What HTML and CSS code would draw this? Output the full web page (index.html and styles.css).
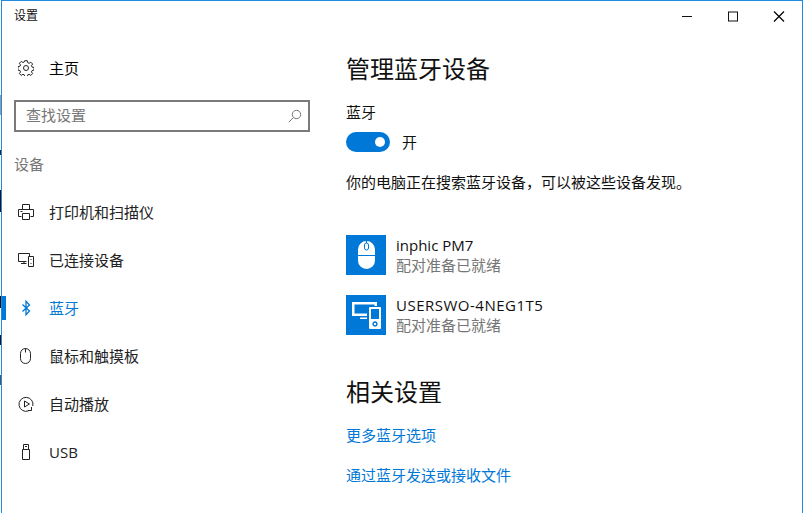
FILE: index.html
```html
<!DOCTYPE html>
<html lang="zh-CN">
<head>
<meta charset="utf-8">
<title>设置</title>
<link rel="stylesheet" href="styles.css">
</head>
<body>
<div class="window">
  <header class="titlebar">
    <span class="title">设置</span>
    <div class="controls">
      <svg class="ctl" width="46" height="30" viewBox="0 0 46 30"><path d="M18 15.500H28" fill="none" stroke="#111" /></svg>
      <svg class="ctl" width="46" height="30" viewBox="0 0 46 30"><rect x="18.500" y="11" width="9" height="9" fill="none" stroke="#111"/></svg>
      <svg class="ctl" width="46" height="30" viewBox="0 0 46 30"><path d="M18 10.500l10 10M28 10.500l-10 10" fill="none" stroke="#000" stroke-width="1.200"/></svg>
    </div>
  </header>
  <div class="body">
    <nav class="side">
      <a class="nav-item home">
        <svg class="ico" width="16" height="16" viewBox="0 0 16 16"><g fill="none" stroke="#222"><circle cx="8" cy="8" r="2.500"/><path d="M6.700.7h2.600l.4 2 1.400.6 1.700-1.100 1.800 1.800-1.100 1.700.6 1.400 2 .4v2.600l-2 .4-.6 1.400 1.100 1.700-1.800 1.800-1.700-1.100-1.400.6-.4 2H6.700l-.4-2-1.400-.6-1.700 1.100-1.800-1.800 1.100-1.700-.6-1.400-2-.4V6.700l2-.4.6-1.400-1.100-1.700 1.800-1.800 1.700 1.100 1.400-.6z"/></g></svg>
        <span>主页</span>
      </a>
      <div class="search">
        <span class="search-text">查找设置</span>
        <svg width="14" height="14" viewBox="0 0 14 14"><g fill="none" stroke="#777"><circle cx="8.500" cy="5.500" r="4.200"/><path d="M5.500 8.500L.8 13.200"/></g></svg>
      </div>
      <div class="group">设备</div>
      <a class="nav-item">
        <svg class="ico" width="16" height="16" viewBox="0 0 16 16"><g fill="none" stroke="#222"><path d="M4.500 5V.5h7V5M3.500 12.500H.5V5.500h15v7h-3"/><path d="M4.500 9.500h7v6h-7z"/><path d="M2.500 7.500h2"/></g></svg>
        <span>打印机和扫描仪</span>
      </a>
      <a class="nav-item">
        <svg class="ico" width="16" height="16" viewBox="0 0 16 16"><g fill="none" stroke="#222"><path d="M8.500 9.500H.5V1.500h11v3"/><path d="M3 11.500h5.500M6 9.500v2"/><path d="M10.500 4.500h5v10h-5z"/><path d="M12.500 7.500h1M12.500 11.500h1" /></g></svg>
        <span>已连接设备</span>
      </a>
      <a class="nav-item active">
        <svg class="ico" width="16" height="16" viewBox="0 0 16 16"><path d="M4.500 4.500l7 6.500L8 14.800V1.200l3.500 3.800-7 6.500" fill="none" stroke="#0078d7" stroke-width="1.300"/></svg>
        <span>蓝牙</span>
      </a>
      <a class="nav-item">
        <svg class="ico" width="16" height="16" viewBox="0 0 16 16"><g fill="none" stroke="#222"><rect x="2.500" y="0.500" width="10" height="15" rx="5"/><path d="M7.500 .5v4"/></g></svg>
        <span>鼠标和触摸板</span>
      </a>
      <a class="nav-item">
        <svg class="ico" width="16" height="16" viewBox="0 0 16 16"><g fill="none" stroke="#222"><path d="M10.500 14.900A7 7 0 1 1 14.800 10"/><path d="M6.500 5v6l5-3z"/><path d="M13.500 11v3.500H10"/></g></svg>
        <span>自动播放</span>
      </a>
      <a class="nav-item">
        <svg class="ico" width="16" height="16" viewBox="0 0 16 16"><g fill="none" stroke="#222"><path d="M4.500 5.500h7v10h-7z"/><path d="M5.500 5.500v-5h5v5"/><path d="M7 2.500h2" /></g></svg>
        <span class="latin">USB</span>
      </a>
    </nav>
    <main class="content">
      <h1 class="h1">管理蓝牙设备</h1>
      <div class="label">蓝牙</div>
      <div class="toggle-row">
        <span class="toggle"><span class="knob"></span></span>
        <span class="state">开</span>
      </div>
      <p class="note">你的电脑正在搜索蓝牙设备，可以被这些设备发现。</p>
      <ul class="devices">
        <li class="device">
          <span class="tile">
            <svg width="40" height="40" viewBox="0 0 40 40"><path fill="#fff" d="M12 14.500a8.500 8.500 0 0 1 17 0v11a8.500 8.500 0 0 1-17 0z"/><path fill="none" stroke="#0078d7" d="M12 20.500h17M20.500 6v2"/><rect x="18.500" y="8" width="4" height="7" rx="2" fill="none" stroke="#0078d7"/></svg>
          </span>
          <div class="dev-text"><div class="dev-name">inphic PM7</div><div class="dev-status">配对准备已就绪</div></div>
        </li>
        <li class="device">
          <span class="tile">
            <svg width="40" height="40" viewBox="0 0 40 40"><path fill="#fff" d="M6 7h25v4h-2.500V9.500h-20V18.500H21V21H6z"/><path fill="#fff" d="M14 22.500h7V24h-7z"/><path fill="#fff" fill-rule="evenodd" d="M24 12h10a1 1 0 0 1 1 1v20a1 1 0 0 1-1 1H24a1 1 0 0 1-1-1V13a1 1 0 0 1 1-1zm1 2v10h8V14zm4 12.300a2.700 2.700 0 1 0 .01 0zm0 1.500a1.200 1.200 0 1 1-.01 0z"/></svg>
          </span>
          <div class="dev-text"><div class="dev-name wide">USERSWO-4NEG1T5</div><div class="dev-status">配对准备已就绪</div></div>
        </li>
      </ul>
      <h2 class="h1 related">相关设置</h2>
      <a class="link">更多蓝牙选项</a>
      <a class="link">通过蓝牙发送或接收文件</a>
    </main>
  </div>
</div>
</body>
</html>
```

FILE: styles.css
```css
* { box-sizing: border-box; }
html, body { margin: 0; padding: 0; height: 100%; }
body {
  font-family: "Noto Sans CJK SC", "Liberation Sans", sans-serif; color: #111; overflow: hidden;
  background: linear-gradient(to bottom,
    #fff 0 95px, #999 95px 115px, #fff 115px 150px, #222 150px 155px, #fff 155px 190px,
    #111 190px 212px, #fff 212px 296px, #111 296px 308px, #fff 308px 335px,
    #111 335px 345px, #fff 345px 375px, #555 375px 385px, #fff 385px);
}
.window { width: 802px; height: 513px; margin-left: 1px; border-top: 1px solid #1f8ce0; border-left: 1px solid #1f8ce0; border-right: 1px solid #1f8ce0; display: flex; flex-direction: column; background: #fff; }
.titlebar { height: 31px; display: flex; justify-content: space-between; align-items: flex-start; flex: none; }
.title { font-size: 12px; line-height: 16px; margin: 6px 0 0 12px; color: #111; }
.controls { display: flex; }
.ctl { display: block; }
.body { display: flex; flex: 1; min-height: 0; }
.side { width: 344px; flex: none; display: flex; flex-direction: column; }
.nav-item { display: flex; align-items: center; height: 48px; flex: none; padding-left: 16px; font-size: 15px; color: #222; position: relative; }
.nav-item span { margin-bottom: 1px; }
.nav-item .latin { margin-bottom: 0; }
.nav-item .ico { margin-right: 15px; flex: none; }
.nav-item.home { margin-top: 12px; color: #000; }
.nav-item.active { color: #0078d7; }
.nav-item.active::before { content: ""; position: absolute; left: 0; top: 12px; width: 4px; height: 24px; background: #0078d7; }
.latin { font-family: "Open Sans", "Liberation Sans", sans-serif; }
.search { width: 296px; height: 32px; flex: none; margin: 8px 0 0 12px; border: 2px solid #7a7a7a; display: flex; align-items: center; justify-content: space-between; padding: 0 6px 0 10px; }
.search-text { font-size: 15px; color: #777; margin-bottom: 3px; }
.group { font-size: 15px; color: #777; margin: 22px 0 14px 12px; line-height: 20px; }
.content { flex: 1; padding-top: 18px; }
.h1 { font-size: 24px; font-weight: 400; line-height: 36px; margin: 0; color: #111; }
.label { font-size: 15px; line-height: 20px; margin-top: 16px; color: #111; }
.toggle-row { display: flex; align-items: center; margin-top: 10px; gap: 12px; }
.toggle { width: 44px; height: 20px; border-radius: 10px; background: #0078d7; display: flex; align-items: center; justify-content: flex-end; padding-right: 5px; }
.knob { width: 10px; height: 10px; border-radius: 50%; background: #fff; }
.state { font-size: 15px; line-height: 20px; }
.note { font-size: 15px; line-height: 20px; margin: 20px 0 0; color: #111; }
.devices { list-style: none; margin: 43px 0 0; padding: 0; display: flex; flex-direction: column; gap: 20px; }
.device { display: flex; gap: 10px; height: 40px; }
.tile { width: 40px; height: 40px; background: #0078d7; display: block; flex: none; }
.tile svg { display: block; }
.dev-text { display: flex; flex-direction: column; }
.dev-name { font-family: "Open Sans", "Liberation Sans", sans-serif; font-size: 15px; line-height: 20px; color: #111; }
.dev-name.wide { letter-spacing: 0.5px; }
.dev-status { font-size: 15px; line-height: 20px; color: #767676; }
.related { margin-top: 38px; }
.link { display: block; font-size: 15px; line-height: 20px; color: #0078d7; margin-top: 20px; }
.related + .link { margin-top: 16px; }
```
